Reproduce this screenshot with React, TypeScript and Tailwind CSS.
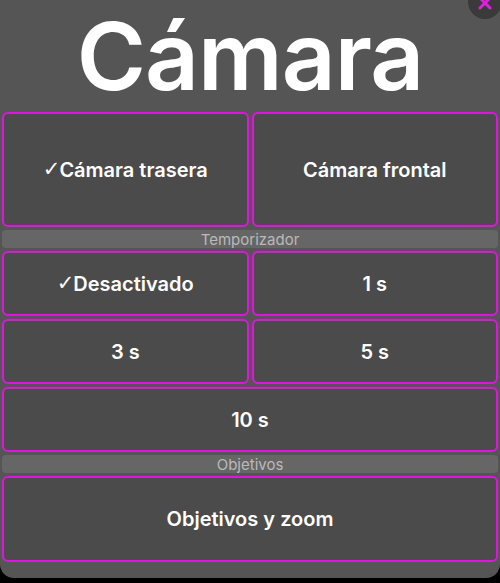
import { X } from "lucide-react"

function Option({ label, checked, className }: { label: string; checked?: boolean; className?: string }) {
    return (
        <button
            className={`flex items-center justify-center rounded-[6px] border-2 border-[#e014e0] bg-[#4b4b4b] text-[20px] font-semibold text-white ${className ?? ""}`}
        >
            {checked && <span className="-mr-[1px] font-['DejaVu_Sans'] text-[21px] font-bold">✓</span>}
            {label}
        </button>
    )
}

function SectionHeader({ title }: { title: string }) {
    return (
        <div className="flex h-[18px] items-center justify-center rounded-[4px] bg-[#666666] text-[15px] leading-none text-[#bababa]">
            {title}
        </div>
    )
}

export default function App() {
    return (
        <div className="relative h-[583px] w-[500px] overflow-hidden bg-black" style={{ fontFamily: "Inter, 'Noto Sans', sans-serif" }}>
            <div className="flex h-[578px] flex-col gap-[3px] rounded-b-[14px] bg-[#555555] px-[2px]">
                {/* Title */}
                <div className="-mb-[3px] flex h-[112px] items-start justify-center">
                    <h1 className="text-[94px] font-semibold leading-[1.2] tracking-[-1px] text-white">Cámara</h1>
                </div>

                <div className="grid h-[115px] grid-cols-2 gap-[3px]">
                    <Option label="Cámara trasera" checked />
                    <Option label="Cámara frontal" />
                </div>

                <SectionHeader title="Temporizador" />

                <div className="grid grid-cols-2 gap-[3px]">
                    <Option label="Desactivado" checked className="h-[65px]" />
                    <Option label="1 s" className="h-[65px]" />
                    <Option label="3 s" className="h-[65px]" />
                    <Option label="5 s" className="h-[65px]" />
                    <Option label="10 s" className="col-span-2 h-[65px]" />
                </div>

                <SectionHeader title="Objetivos" />

                <Option label="Objetivos y zoom" className="h-[86px]" />
            </div>

            {/* Close */}
            <button className="absolute right-[-2px] top-[-15px] flex h-[34px] w-[34px] items-end justify-center rounded-full bg-[#3a3a3a] pb-[6px]">
                <X size={20} strokeWidth={3.5} className="text-[#e21ee2]" />
            </button>
        </div>
    )
}
